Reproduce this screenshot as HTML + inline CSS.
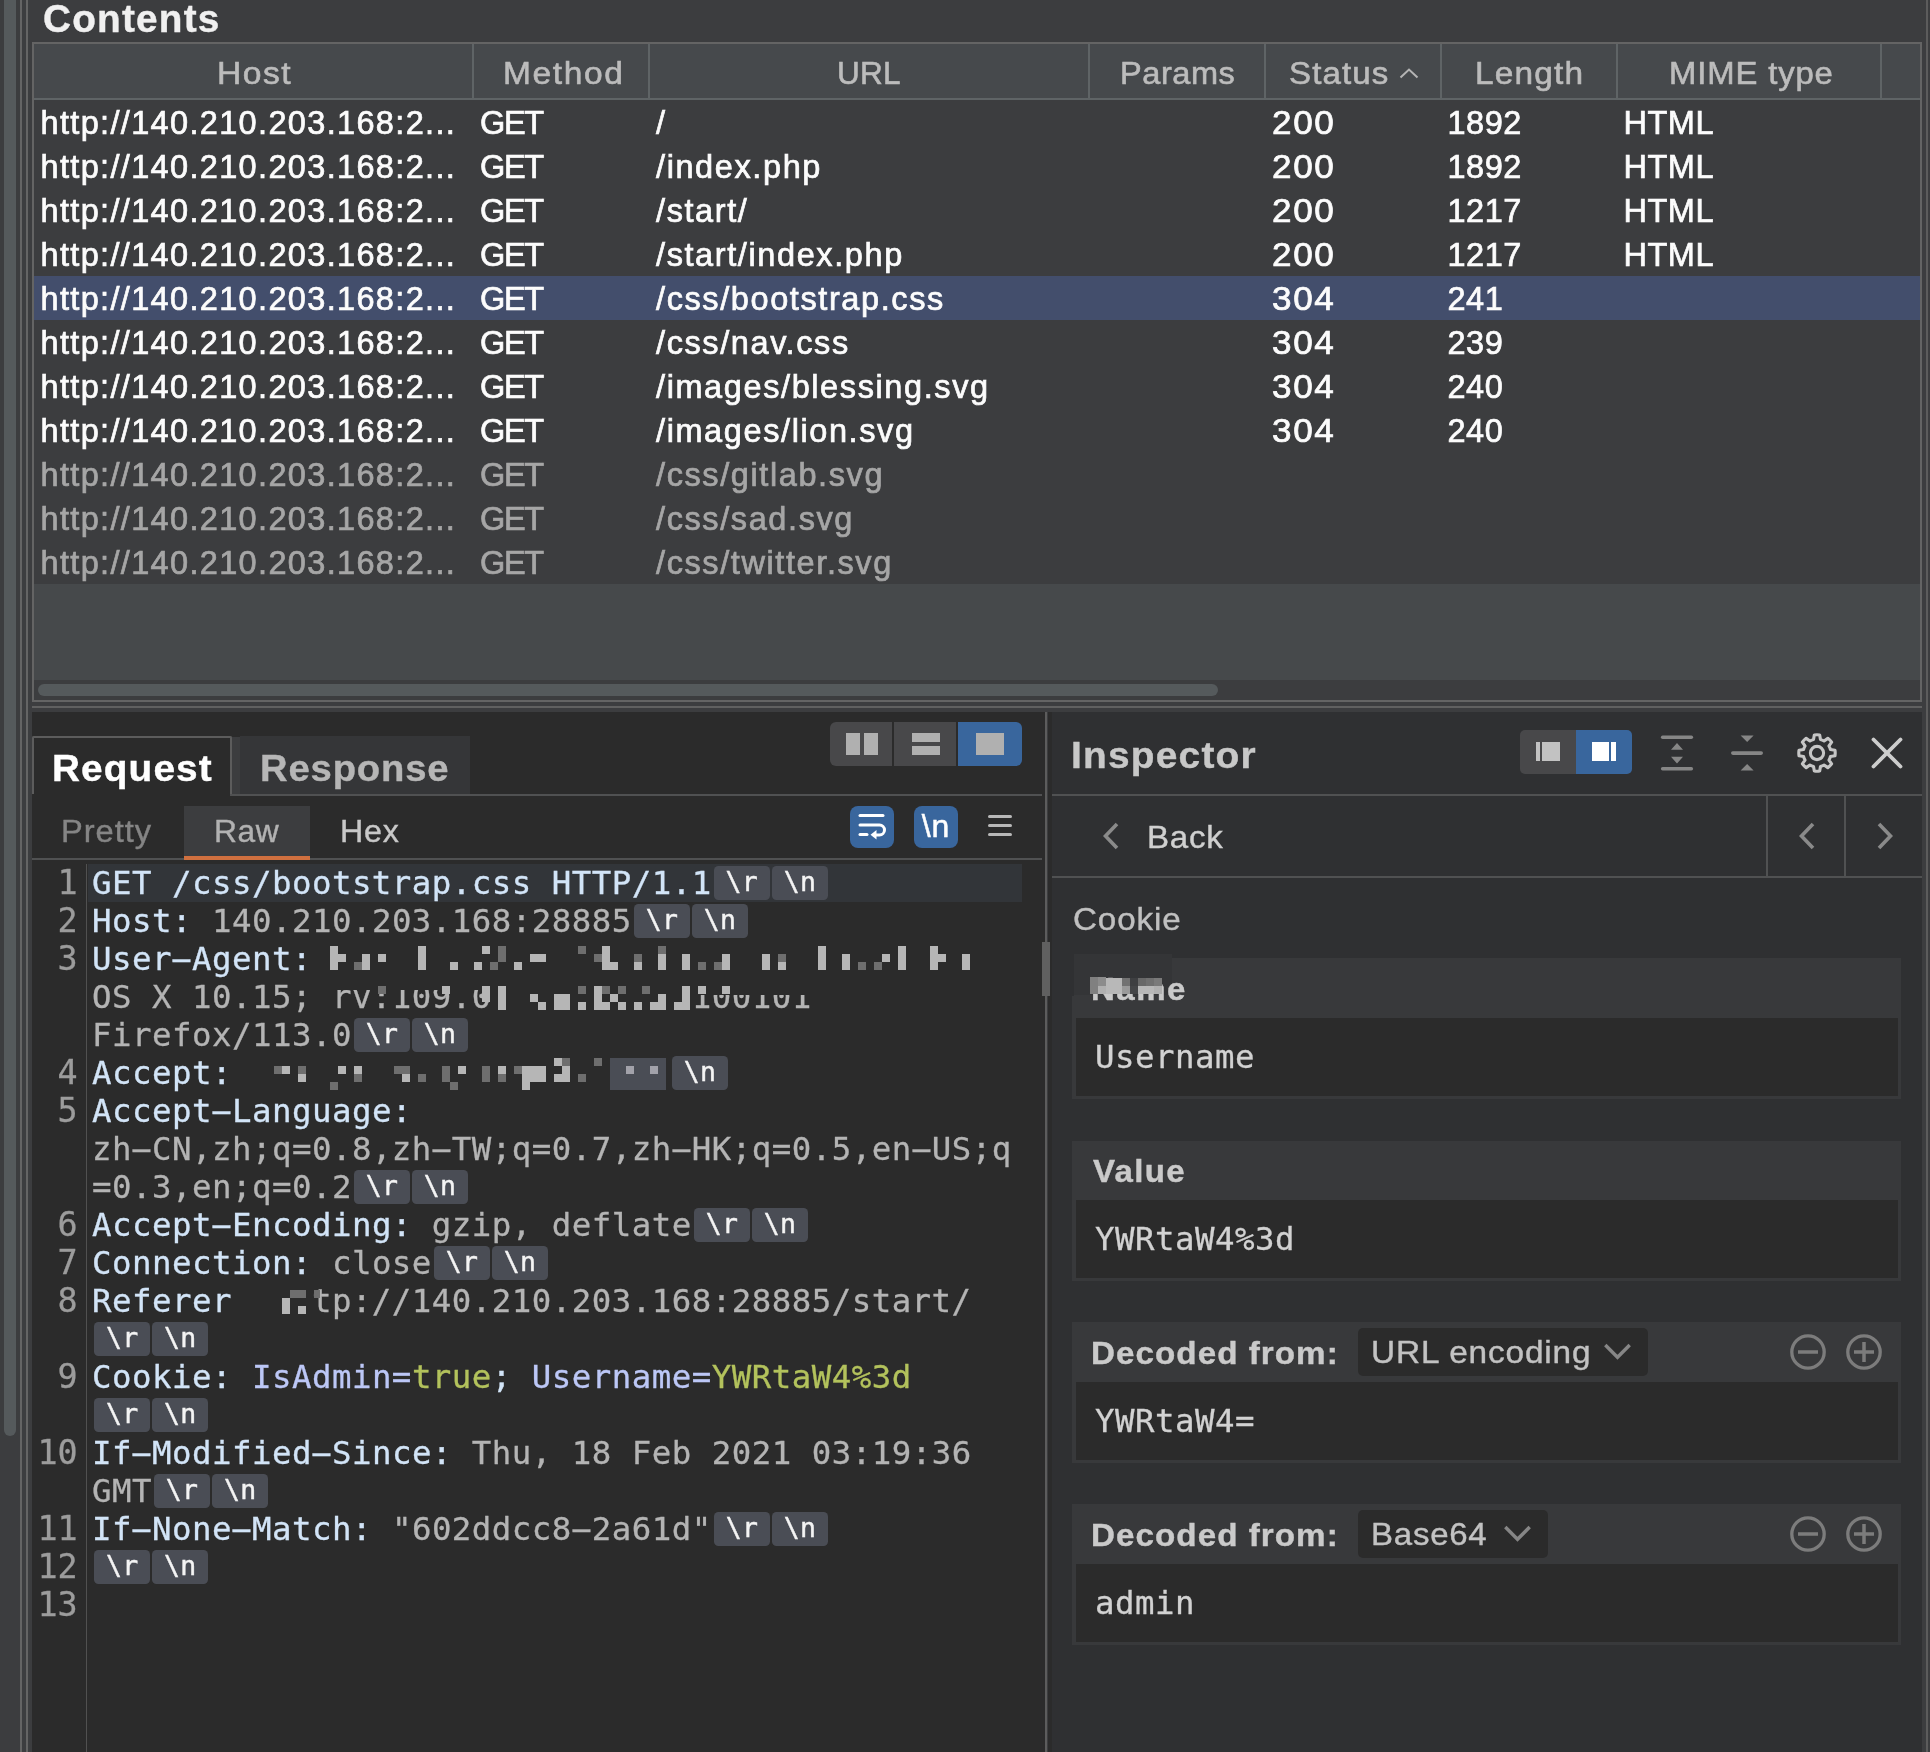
<!DOCTYPE html>
<html lang="en">
<head>
<meta charset="utf-8">
<title>Burp Suite - Contents</title>
<style>
*{box-sizing:border-box;margin:0;padding:0}
html,body{width:1930px;height:1752px;overflow:hidden;background:#3c3d3f}
body{position:relative;font-family:"Liberation Sans",sans-serif;color:#f0f0f0;-webkit-text-stroke:0.4px}
.abs{position:absolute}
.ln{position:absolute;background:#646464}
/* ---------- table ---------- */
#title{left:42.7px;top:-2.6px;font-size:38.5px;font-weight:bold;color:#f0f0f0;line-height:normal;letter-spacing:1.21px;transform:scaleX(1.006);transform-origin:0 0;white-space:nowrap}
#tbl{left:32px;top:42px;width:1890px;height:660px;border:2px solid #646464;background:#46494b}
#thead{left:0;top:0;width:1886px;height:54px;background:#46494c}
.th{position:absolute;top:10.9px;font-size:31.5px;line-height:normal;white-space:nowrap;color:#bcbcbc;transform-origin:0 0;-webkit-text-stroke:0.6px}
.vs{position:absolute;top:0;width:2px;height:54px;background:#5f6466}
#hline{left:0;top:54px;width:1886px;height:2px;background:#5f6466}
#rows{left:0;top:56px;width:1886px;height:484px;background:#3c3d3f}
.r{position:absolute;left:0;width:1886px;height:44px;font-size:32.5px;line-height:47px;color:#fcfcfc;white-space:nowrap;-webkit-text-stroke:0.7px}
.r.sel{background:#434e6c}
.r.dim{color:#a6a6a6}
.r span{position:absolute;top:0;transform-origin:0 50%}
.c1{left:6.5px;letter-spacing:1.34px}.c2{left:446px;letter-spacing:-1.3px}.c3{left:622px;letter-spacing:1.6px}.c5{left:1237.5px;letter-spacing:1.5px;transform:scaleX(1.08)}.c6{left:1413.5px;letter-spacing:0.5px}.c7{left:1589.5px;letter-spacing:0.5px}
#hscroll{left:0;top:636px;width:1886px;height:20px;background:#3c3d3f}
#hthumb{left:4px;top:4px;width:1180px;height:12px;border-radius:6px;background:#555a5c}
</style>
</head>
<body>
<div id="root" style="position:absolute;left:0;top:0;width:1930px;height:1752px;will-change:transform">
<!-- left window chrome -->
<div class="abs" style="left:4px;top:0;width:12px;height:1436px;background:#555a5c;border-radius:0 0 6px 6px"></div>
<div class="ln" style="left:20px;top:0;width:2px;height:1752px"></div>
<div class="ln" style="left:25.5px;top:0;width:2px;height:1752px"></div>
<div class="ln" style="left:1925.5px;top:0;width:2.2px;height:1752px;background:#5c5c5c"></div>

<div id="title" class="abs">Contents</div>

<div id="tbl" class="abs">
  <div id="thead" class="abs">
    <div class="th" style="left:183.2px;letter-spacing:1.42px;transform:scaleX(1.067)">Host</div>
    <div class="th" style="left:468.9px;letter-spacing:1.5px;transform:scaleX(1.064)">Method</div>
    <div class="th" style="left:803.0px;letter-spacing:0.25px;transform:scaleX(1.0)">URL</div>
    <div class="th" style="left:1086.4px;letter-spacing:0.55px;transform:scaleX(1.032)">Params</div>
    <div class="th" style="left:1254.9px;letter-spacing:1.05px;transform:scaleX(1.049)">Status</div>
    <div class="th" style="left:1441.4px;letter-spacing:1.1px;transform:scaleX(1.061)">Length</div>
    <div class="th" style="left:1634.9px;letter-spacing:0.84px;transform:scaleX(1.042)">MIME type</div>
    <svg class="abs" style="left:1364px;top:21.5px" width="22" height="14" viewBox="0 0 22 14"><path d="M2.5 11.5 L11 3.5 L19.5 11.5" fill="none" stroke="#b4b4b4" stroke-width="2"/></svg>
    <div class="vs" style="left:438px"></div><div class="vs" style="left:614px"></div><div class="vs" style="left:1054px"></div>
    <div class="vs" style="left:1230px"></div><div class="vs" style="left:1406px"></div><div class="vs" style="left:1582px"></div><div class="vs" style="left:1846px"></div>
  </div>
  <div id="hline" class="abs"></div>
  <div id="rows" class="abs">
    <div class="r" style="top:0"><span class="c1">http://140.210.203.168:2...</span><span class="c2">GET</span><span class="c3">/</span><span class="c5">200</span><span class="c6">1892</span><span class="c7">HTML</span></div>
    <div class="r" style="top:44px"><span class="c1">http://140.210.203.168:2...</span><span class="c2">GET</span><span class="c3">/index.php</span><span class="c5">200</span><span class="c6">1892</span><span class="c7">HTML</span></div>
    <div class="r" style="top:88px"><span class="c1">http://140.210.203.168:2...</span><span class="c2">GET</span><span class="c3">/start/</span><span class="c5">200</span><span class="c6">1217</span><span class="c7">HTML</span></div>
    <div class="r" style="top:132px"><span class="c1">http://140.210.203.168:2...</span><span class="c2">GET</span><span class="c3">/start/index.php</span><span class="c5">200</span><span class="c6">1217</span><span class="c7">HTML</span></div>
    <div class="r sel" style="top:176px"><span class="c1">http://140.210.203.168:2...</span><span class="c2">GET</span><span class="c3">/css/bootstrap.css</span><span class="c5">304</span><span class="c6">241</span></div>
    <div class="r" style="top:220px"><span class="c1">http://140.210.203.168:2...</span><span class="c2">GET</span><span class="c3">/css/nav.css</span><span class="c5">304</span><span class="c6">239</span></div>
    <div class="r" style="top:264px"><span class="c1">http://140.210.203.168:2...</span><span class="c2">GET</span><span class="c3">/images/blessing.svg</span><span class="c5">304</span><span class="c6">240</span></div>
    <div class="r" style="top:308px"><span class="c1">http://140.210.203.168:2...</span><span class="c2">GET</span><span class="c3">/images/lion.svg</span><span class="c5">304</span><span class="c6">240</span></div>
    <div class="r dim" style="top:352px"><span class="c1">http://140.210.203.168:2...</span><span class="c2">GET</span><span class="c3">/css/gitlab.svg</span></div>
    <div class="r dim" style="top:396px"><span class="c1">http://140.210.203.168:2...</span><span class="c2">GET</span><span class="c3">/css/sad.svg</span></div>
    <div class="r dim" style="top:440px"><span class="c1">http://140.210.203.168:2...</span><span class="c2">GET</span><span class="c3">/css/twitter.svg</span></div>
  </div>
  <div id="hscroll" class="abs"><div id="hthumb" class="abs"></div></div>
</div>
<div class="ln" style="left:32px;top:705.6px;width:1889.5px;height:2px;background:#606060"></div>


<style>
/* ---------- lower panes ---------- */
#req{left:32px;top:712px;width:1014px;height:1040px;background:#2b2b2b}
#insp{left:1048px;top:712px;width:874px;height:1040px;background:#2f3032}
.fx{position:absolute;white-space:nowrap;line-height:normal;transform-origin:0 0}
.tab1{font-weight:bold;font-size:37px}
.tab2{font-size:31px}
.hl{position:absolute;height:1.6px;background:#505152}
.bbtn{position:absolute;background:#48484a}
.bbtn.on{background:#39669d}
/* editor */
#ed{left:0;top:152px;width:1014px;height:888px;font-family:"DejaVu Sans Mono","Liberation Mono",monospace;font-size:32.4px;letter-spacing:0.49px;-webkit-text-stroke:0.3px}
.l{position:absolute;left:60px;height:38px;line-height:38px;white-space:pre;color:#b4b4b4}
.n{position:absolute;left:0;width:45.4px;height:38px;line-height:38px;text-align:right;color:#9c9c9c;white-space:pre;font-size:33.4px;letter-spacing:-0.1px}
.hy{display:inline-block;transform:scaleX(2.1)}
.h{color:#d2e4f7}
.k{color:#bcc7f6}
.v{color:#b3c25c}
.p{display:inline-block;vertical-align:top;width:55.9px;height:33.7px;margin:2.2px 0 0 2.2px;border-radius:4.5px;background:#4a4d55;color:#f4f4f4;font-size:26.5px;letter-spacing:0.3px;line-height:32px;text-align:center;-webkit-text-stroke:0.45px}
.m{position:absolute;width:8px;height:8px;background:#b0b0b0}
</style>
<div id="req" class="abs">
  <!-- Request / Response tabs -->
  <div class="abs" style="left:0;top:24.3px;width:200px;height:58px;border:2px solid #5c5c5c;border-bottom:none;border-radius:2px 2px 0 0"></div>
  <div class="abs" style="left:200px;top:25px;width:8px;height:57px;background:#3c3d3f"></div>
  <div class="abs" style="left:208px;top:24.3px;width:230px;height:57.5px;background:#353638"></div>
  <div class="hl" style="left:198.3px;top:81.9px;width:811.7px;height:2px"></div>
  <div class="fx tab1" style="left:19.5px;top:36px;color:#fff;letter-spacing:1.09px;transform:scaleX(1.047)">Request</div>
  <div class="fx tab1" style="left:227.8px;top:36px;color:#b6b6b6;letter-spacing:0.84px;transform:scaleX(1.032)">Response</div>
  <!-- layout buttons -->
  <div class="bbtn" style="left:798px;top:10px;width:62px;height:44px;border-radius:6px 0 0 6px"></div>
  <div class="bbtn" style="left:862px;top:10px;width:62px;height:44px"></div>
  <div class="bbtn on" style="left:926px;top:10px;width:64px;height:44px;border-radius:0 6px 6px 0"></div>
  <div class="abs" style="left:813.5px;top:21px;width:14.5px;height:22px;background:#b0b0b0"></div>
  <div class="abs" style="left:831.7px;top:21px;width:14.5px;height:22px;background:#b0b0b0"></div>
  <div class="abs" style="left:880px;top:21px;width:28px;height:9.3px;background:#b0b0b0"></div>
  <div class="abs" style="left:880px;top:34px;width:28px;height:9px;background:#b0b0b0"></div>
  <div class="abs" style="left:944.4px;top:21px;width:27.2px;height:22px;background:#b0b0b0"></div>
  <!-- Pretty / Raw / Hex -->
  <div class="abs" style="left:152px;top:94px;width:126px;height:50px;background:#3c3d3f"></div>
    <div class="fx tab2" style="left:29.3px;top:102px;color:#858585;letter-spacing:0.94px;transform:scaleX(1.052)">Pretty</div>
  <div class="fx tab2" style="left:181.6px;top:102px;color:#b2b2b2;letter-spacing:0.6px;transform:scaleX(1.023)">Raw</div>
  <div class="fx tab2" style="left:307.6px;top:102px;color:#c8c8c8;letter-spacing:0.78px;transform:scaleX(1.039)">Hex</div>
  <div class="hl" style="left:0;top:146.2px;width:1010px"></div>
  <div class="abs" style="left:152px;top:144px;width:126px;height:3.8px;background:#d0703f"></div>
  <!-- editor toolbar buttons -->
  <div class="bbtn on" style="left:818px;top:94px;width:44px;height:42px;border-radius:8px"></div>
  <svg class="abs" style="left:818px;top:93px" width="44" height="42" viewBox="0 0 44 42"><g fill="none" stroke="#fff" stroke-width="3" stroke-linecap="round" stroke-linejoin="round"><path d="M10 10.5H33"/><path d="M10 20H29.5a5 5 0 0 1 0 10H24"/><path d="M10 29.5H17"/></g><path d="M20.5 29.8 L26.5 25 V34.6 Z" fill="#fff"/></svg>
  <div class="bbtn on" style="left:882px;top:94px;width:44px;height:42px;border-radius:8px"></div>
  <div class="abs" style="left:882px;top:94px;width:44px;height:42px;line-height:40px;text-align:center;font-size:32px;color:#fff;letter-spacing:1px;-webkit-text-stroke:0.5px">\n</div>
  <div class="abs" style="left:956px;top:103px;width:24px;height:3px;border-radius:1.5px;background:#b8b8b8"></div>
  <div class="abs" style="left:956px;top:112px;width:24px;height:3px;border-radius:1.5px;background:#b8b8b8"></div>
  <div class="abs" style="left:956px;top:121px;width:24px;height:3px;border-radius:1.5px;background:#b8b8b8"></div>
  <!-- editor -->
  <div id="ed" class="abs">
    <div class="abs" style="left:53.8px;top:0;width:1.4px;height:888px;background:#515151"></div>
    <div class="abs" style="left:56px;top:0;width:934px;height:38px;background:#323539"></div>
    <div class="n" style="top:0px">1</div>
    <div class="l" style="top:0px"><span class="h">GET /css/bootstrap.css HTTP/1.1</span><span class="p">\r</span><span class="p">\n</span></div>
    <div class="n" style="top:38px">2</div>
    <div class="l" style="top:38px"><span class="h">Host:</span> 140.210.203.168:28885<span class="p">\r</span><span class="p">\n</span></div>
    <div class="n" style="top:76px">3</div>
    <div class="l" style="top:76px"><span class="h">User<span class="hy">-</span>Agent:</span> </div>
    <div class="l" style="top:114px">OS X 10.15; rv:109.0          100101</div>
    <div class="l" style="top:152px">Firefox/113.0<span class="p">\r</span><span class="p">\n</span></div>
    <div class="n" style="top:190px">4</div>
    <div class="l" style="top:190px"><span class="h">Accept:</span>                   <span class="p" style="visibility:hidden">\r</span><span class="p">\n</span></div>
    <div class="n" style="top:228px">5</div>
    <div class="l" style="top:228px"><span class="h">Accept<span class="hy">-</span>Language:</span></div>
    <div class="l" style="top:266px">zh<span class="hy">-</span>CN,zh;q=0.8,zh<span class="hy">-</span>TW;q=0.7,zh<span class="hy">-</span>HK;q=0.5,en<span class="hy">-</span>US;q</div>
    <div class="l" style="top:304px">=0.3,en;q=0.2<span class="p">\r</span><span class="p">\n</span></div>
    <div class="n" style="top:342px">6</div>
    <div class="l" style="top:342px"><span class="h">Accept<span class="hy">-</span>Encoding:</span> gzip, deflate<span class="p">\r</span><span class="p">\n</span></div>
    <div class="n" style="top:380px">7</div>
    <div class="l" style="top:380px"><span class="h">Connection:</span> close<span class="p">\r</span><span class="p">\n</span></div>
    <div class="n" style="top:418px">8</div>
    <div class="l" style="top:418px"><span class="h">Referer</span>    tp://140.210.203.168:28885/start/</div>
    <div class="l" style="top:456px"><span class="p">\r</span><span class="p">\n</span></div>
    <div class="n" style="top:494px">9</div>
    <div class="l" style="top:494px"><span class="h">Cookie:</span> <span class="k">IsAdmin=</span><span class="v">true</span><span class="h">;</span> <span class="k">Username=</span><span class="v">YWRtaW4%3d</span></div>
    <div class="l" style="top:532px"><span class="p">\r</span><span class="p">\n</span></div>
    <div class="n" style="top:570px">10</div>
    <div class="l" style="top:570px"><span class="h">If<span class="hy">-</span>Modified<span class="hy">-</span>Since:</span> Thu, 18 Feb 2021 03:19:36</div>
    <div class="l" style="top:608px">GMT<span class="p">\r</span><span class="p">\n</span></div>
    <div class="n" style="top:646px">11</div>
    <div class="l" style="top:646px"><span class="h">If<span class="hy">-</span>None<span class="hy">-</span>Match:</span> "602ddcc8<span class="hy">-</span>2a61d"<span class="p">\r</span><span class="p">\n</span></div>
    <div class="n" style="top:684px">12</div>
    <div class="l" style="top:684px"><span class="p">\r</span><span class="p">\n</span></div>
    <div class="n" style="top:722px">13</div>
    <svg class="abs" style="left:0;top:0" width="1014" height="888" viewBox="0 0 1014 888" shape-rendering="crispEdges"><rect x="298" y="114" width="182" height="12" fill="#2b2b2b"/><rect x="658" y="114" width="124" height="17" fill="#2b2b2b"/><rect x="578" y="194" width="56" height="32" fill="#4a4d55"/><path d="M594 202h8v8h-8zM618 202h8v8h-8z" fill="#a2a2aa"/><path d="M298 82h8v8h-8zM386 82h8v8h-8zM450 82h8v8h-8zM570 82h8v8h-8zM786 82h8v8h-8zM866 82h8v8h-8zM898 82h8v8h-8zM298 90h8v8h-8zM306 90h8v8h-8zM330 90h8v8h-8zM346 90h8v8h-8zM386 90h8v8h-8zM498 90h8v8h-8zM506 90h8v8h-8zM570 90h8v8h-8zM626 90h8v8h-8zM650 90h8v8h-8zM690 90h8v8h-8zM730 90h8v8h-8zM786 90h8v8h-8zM810 90h8v8h-8zM850 90h8v8h-8zM866 90h8v8h-8zM898 90h8v8h-8zM906 90h8v8h-8zM930 90h8v8h-8zM298 98h8v8h-8zM330 98h8v8h-8zM386 98h8v8h-8zM418 98h8v8h-8zM442 98h8v8h-8zM482 98h8v8h-8zM570 98h8v8h-8zM578 98h8v8h-8zM602 98h8v8h-8zM626 98h8v8h-8zM650 98h8v8h-8zM690 98h8v8h-8zM730 98h8v8h-8zM746 98h8v8h-8zM786 98h8v8h-8zM810 98h8v8h-8zM866 98h8v8h-8zM898 98h8v8h-8zM930 98h8v8h-8zM410 122h8v8h-8zM450 122h8v8h-8zM466 122h8v8h-8zM562 122h8v8h-8zM650 122h8v8h-8zM666 122h8v8h-8zM690 122h8v8h-8zM450 130h8v8h-8zM466 130h8v8h-8zM498 130h8v8h-8zM522 130h8v8h-8zM530 130h8v8h-8zM562 130h8v8h-8zM578 130h8v8h-8zM626 130h8v8h-8zM650 130h8v8h-8zM466 138h8v8h-8zM506 138h8v8h-8zM522 138h8v8h-8zM530 138h8v8h-8zM546 138h8v8h-8zM562 138h8v8h-8zM570 138h8v8h-8zM586 138h8v8h-8zM602 138h8v8h-8zM618 138h8v8h-8zM626 138h8v8h-8zM642 138h8v8h-8zM650 138h8v8h-8zM522 194h8v8h-8zM250 202h8v8h-8zM306 202h8v8h-8zM322 202h8v8h-8zM426 202h8v8h-8zM466 202h8v8h-8zM490 202h8v8h-8zM498 202h8v8h-8zM506 202h8v8h-8zM530 202h8v8h-8zM266 210h8v8h-8zM370 210h8v8h-8zM490 210h8v8h-8zM498 210h8v8h-8zM506 210h8v8h-8zM522 210h8v8h-8zM530 210h8v8h-8zM490 218h8v8h-8zM250 434h8v8h-8zM250 442h8v8h-8zM266 442h8v8h-8z" fill="#b6b6b6"/><path d="M466 82h8v8h-8zM546 82h8v8h-8zM626 82h8v8h-8zM466 90h8v8h-8zM562 90h8v8h-8zM602 90h8v8h-8zM746 90h8v8h-8zM322 98h8v8h-8zM458 98h8v8h-8zM666 98h8v8h-8zM682 98h8v8h-8zM826 98h8v8h-8zM842 98h8v8h-8zM346 122h8v8h-8zM546 122h8v8h-8zM570 122h8v8h-8zM586 122h8v8h-8zM610 122h8v8h-8zM530 194h8v8h-8zM562 194h8v8h-8zM242 202h8v8h-8zM266 202h8v8h-8zM362 202h8v8h-8zM370 202h8v8h-8zM410 202h8v8h-8zM450 202h8v8h-8zM482 202h8v8h-8zM322 210h8v8h-8zM386 210h8v8h-8zM410 210h8v8h-8zM450 210h8v8h-8zM466 210h8v8h-8zM546 210h8v8h-8zM298 218h8v8h-8zM418 218h8v8h-8zM258 426h8v8h-8zM266 426h8v8h-8zM282 426h6v8h-6z" fill="#6e6e6e"/></svg>
  </div>
</div>
<div id="insp" class="abs"><div class="abs" style="left:0;top:0;width:4px;height:1040px;background:#2b2b2b"></div>

<style>
#insp .t{position:absolute;white-space:nowrap}
.card{position:absolute;left:24.3px;width:829px;height:140.6px;background:#38393b}
.fld{position:absolute;left:3.7px;top:59.6px;width:821.7px;height:77.7px;background:#2b2b2b;font-family:"DejaVu Sans Mono","Liberation Mono",monospace;font-size:32.4px;line-height:78.6px;padding-left:19px;color:#d2d2d2;letter-spacing:0.49px;white-space:pre;-webkit-text-stroke:0.3px}
.lbl{left:18.6px;top:12.4px;font-weight:bold;font-size:31.5px;color:#cacaca;letter-spacing:1px;transform:scaleX(1.053)}
.dd{position:absolute;left:286px;top:5.6px;height:47.6px;border-radius:5px;background:#2b2b2b}
.ddt{left:298.6px;top:11.7px;font-size:32px;color:#c2c2c2}
.ico{position:absolute}
</style>
  <div class="fx" style="left:23.4px;top:22.9px;font-weight:bold;font-size:37px;color:#c8c8c8;letter-spacing:1.17px;transform:scaleX(1.05)">Inspector</div>
  <!-- view toggle -->
  <div class="bbtn" style="left:472px;top:18px;width:56px;height:44px;border-radius:5px 0 0 5px"></div>
  <div class="bbtn on" style="left:528px;top:18px;width:56px;height:44px;border-radius:0 5px 5px 0"></div>
  <div class="abs" style="left:488px;top:29.6px;width:4px;height:19.2px;background:#c2c2c2"></div>
  <div class="abs" style="left:494.3px;top:29.6px;width:17.7px;height:19.2px;background:#c2c2c2"></div>
  <div class="abs" style="left:544px;top:29.6px;width:17px;height:19.2px;background:#fff"></div>
  <div class="abs" style="left:563.4px;top:29.6px;width:4.6px;height:19.2px;background:#fff"></div>
  <!-- expand all -->
  <svg class="ico" style="left:608px;top:18px" width="42" height="44" viewBox="0 0 42 44"><g stroke="#868686" stroke-width="3.4" stroke-linecap="round"><path d="M6.6 7.3H35.4"/><path d="M6.6 38.8H35.4"/></g><path d="M15 19.7 L21 13 L27 19.7Z M15 26.8 L21 33.5 L27 26.8Z" fill="#868686"/></svg>
  <!-- collapse all -->
  <svg class="ico" style="left:678px;top:18px" width="42" height="44" viewBox="0 0 42 44"><path d="M6.8 23.1H35.2" stroke="#868686" stroke-width="3.6" stroke-linecap="round"/><path d="M14.6 5.6 L27.6 5.6 L21.1 11.9Z M14.6 40.6 L27.6 40.6 L21.1 34Z" fill="#868686"/></svg>
  <!-- gear -->
  <svg class="ico" style="left:745.8px;top:18px" width="46" height="46" viewBox="0 0 46 46" fill="none" stroke="#c6c6c6" stroke-width="3.1" stroke-linejoin="round"><path d="M19.52 9.54L20.31 5.00A18.2 18.2 0 0 1 25.69 5.00L26.48 9.54A13.9 13.9 0 0 1 30.05 11.02L33.83 8.37A18.2 18.2 0 0 1 37.63 12.17L34.98 15.95A13.9 13.9 0 0 1 36.46 19.52L41.00 20.31A18.2 18.2 0 0 1 41.00 25.69L36.46 26.48A13.9 13.9 0 0 1 34.98 30.05L37.63 33.83A18.2 18.2 0 0 1 33.83 37.63L30.05 34.98A13.9 13.9 0 0 1 26.48 36.46L25.69 41.00A18.2 18.2 0 0 1 20.31 41.00L19.52 36.46A13.9 13.9 0 0 1 15.95 34.98L12.17 37.63A18.2 18.2 0 0 1 8.37 33.83L11.02 30.05A13.9 13.9 0 0 1 9.54 26.48L5.00 25.69A18.2 18.2 0 0 1 5.00 20.31L9.54 19.52A13.9 13.9 0 0 1 11.02 15.95L8.37 12.17A18.2 18.2 0 0 1 12.17 8.37L15.95 11.02A13.9 13.9 0 0 1 19.52 9.54Z"/><circle cx="23" cy="23" r="6.6"/></svg>
  <!-- close -->
  <svg class="ico" style="left:820px;top:22px" width="38" height="38" viewBox="0 0 38 38"><path d="M5.5 5.5 L32.5 32.5 M32.5 5.5 L5.5 32.5" stroke="#cdcdcd" stroke-width="3.8" stroke-linecap="round"/></svg>
  <div class="hl" style="left:4px;top:82.4px;width:870px"></div>
  <div class="hl" style="left:4px;top:164px;width:870px"></div>
  <div class="abs" style="left:718.3px;top:83px;width:1.6px;height:82px;background:#505152"></div>
  <div class="abs" style="left:796.3px;top:83px;width:1.6px;height:82px;background:#505152"></div>
  <svg class="ico" style="left:52px;top:108px" width="22" height="32" viewBox="0 0 22 32"><path d="M17 4 L5.5 16 L17 28" fill="none" stroke="#8a8a8a" stroke-width="3.6"/></svg>
  <div class="fx" style="left:99.4px;top:106.7px;font-size:32px;color:#d0d0d0;letter-spacing:0.73px;transform:scaleX(1.034)">Back</div>
  <svg class="ico" style="left:748px;top:108px" width="22" height="32" viewBox="0 0 22 32"><path d="M17 4 L5.5 16 L17 28" fill="none" stroke="#8a8a8a" stroke-width="3.6"/></svg>
  <svg class="ico" style="left:826px;top:108px" width="22" height="32" viewBox="0 0 22 32"><path d="M5 4 L16.5 16 L5 28" fill="none" stroke="#8a8a8a" stroke-width="3.6"/></svg>
  <div class="fx" style="left:24.5px;top:189.3px;font-size:32px;color:#c0c0c0;letter-spacing:0.87px;transform:scaleX(1.036)">Cookie</div>
  <!-- cards -->
  <div class="card" style="top:246.4px"><svg class="ico" style="left:0;top:-5px" width="110" height="50" viewBox="0 -5 110 50" shape-rendering="crispEdges"><rect x="0" y="0" width="2" height="37.6" fill="#2f3032"/><rect x="2" y="-4.4" width="98.4" height="41" fill="#343537"/></svg><div class="fx lbl" style="letter-spacing:1.38px;transform:scaleX(1.049)">Name</div><svg class="ico" style="left:0;top:0" width="110" height="50" viewBox="0 0 110 50" shape-rendering="crispEdges"><rect x="17.7" y="18.6" width="8" height="9" fill="#808080"/><rect x="25.7" y="18.6" width="8" height="9" fill="#8c8c8c"/><rect x="33.7" y="19.6" width="8" height="8" fill="#b8b8b8"/><rect x="41.7" y="19.6" width="8" height="8" fill="#b8b8b8"/><rect x="49.7" y="19.6" width="8" height="8" fill="#727272"/><rect x="57.7" y="19.6" width="8" height="8" fill="#3e3f41"/><rect x="65.7" y="19.6" width="8" height="8" fill="#686868"/><rect x="73.7" y="19.6" width="8" height="8" fill="#707070"/><rect x="81.7" y="19.6" width="8" height="8" fill="#7a7a7a"/><rect x="17.7" y="27.6" width="8" height="8" fill="#808080"/><rect x="25.7" y="27.6" width="8" height="8" fill="#b0b0b0"/><rect x="33.7" y="27.6" width="8" height="8" fill="#b8b8b8"/><rect x="41.7" y="27.6" width="8" height="8" fill="#b8b8b8"/><rect x="49.7" y="27.6" width="8" height="8" fill="#9a9a9a"/><rect x="57.7" y="27.6" width="8" height="8" fill="#444547"/><rect x="65.7" y="27.6" width="8" height="8" fill="#b8b8b8"/><rect x="73.7" y="27.6" width="8" height="8" fill="#b8b8b8"/><rect x="81.7" y="27.6" width="8" height="8" fill="#b0b0b0"/></svg><div class="fld">Username</div></div>
  <div class="card" style="top:428.5px"><div class="fx lbl" style="left:20.7px;letter-spacing:1.29px;transform:scaleX(1.049)">Value</div><div class="fld">YWRtaW4%3d</div></div>
  <div class="card" style="top:610.4px"><div class="fx lbl">Decoded from:</div><div class="dd" style="width:289.6px"></div><div class="fx ddt" style="letter-spacing:0.81px;transform:scaleX(1.043)">URL encoding</div>
    <svg class="ico" style="left:530.7px;top:19.6px" width="30" height="20" viewBox="0 0 30 20"><path d="M2.3 3 L14.5 15.3 L26.7 3" fill="none" stroke="#868686" stroke-width="3.4"/></svg>
    <svg class="ico" style="left:715.8px;top:9.8px" width="40" height="40" viewBox="0 0 40 40"><circle cx="20" cy="20" r="16.2" fill="none" stroke="#7c7c7c" stroke-width="3.3"/><path d="M10 20H30" stroke="#7c7c7c" stroke-width="3.5"/></svg>
    <svg class="ico" style="left:771.8px;top:9.8px" width="40" height="40" viewBox="0 0 40 40"><circle cx="20" cy="20" r="16.2" fill="none" stroke="#7c7c7c" stroke-width="3.3"/><path d="M10 20H30M20 10V30" stroke="#7c7c7c" stroke-width="3.5"/></svg>
    <div class="fld">YWRtaW4=</div></div>
  <div class="card" style="top:792.4px"><div class="fx lbl">Decoded from:</div><div class="dd" style="width:189.3px"></div><div class="fx ddt" style="letter-spacing:0.74px;transform:scaleX(1.031)">Base64</div>
    <svg class="ico" style="left:430.7px;top:19.6px" width="30" height="20" viewBox="0 0 30 20"><path d="M2.3 3 L14.5 15.3 L26.7 3" fill="none" stroke="#868686" stroke-width="3.4"/></svg>
    <svg class="ico" style="left:715.8px;top:9.8px" width="40" height="40" viewBox="0 0 40 40"><circle cx="20" cy="20" r="16.2" fill="none" stroke="#7c7c7c" stroke-width="3.3"/><path d="M10 20H30" stroke="#7c7c7c" stroke-width="3.5"/></svg>
    <svg class="ico" style="left:771.8px;top:9.8px" width="40" height="40" viewBox="0 0 40 40"><circle cx="20" cy="20" r="16.2" fill="none" stroke="#7c7c7c" stroke-width="3.3"/><path d="M10 20H30M20 10V30" stroke="#7c7c7c" stroke-width="3.5"/></svg>
    <div class="fld">admin</div></div>

</div>

<div class="abs" style="left:1045.2px;top:712px;width:2.3px;height:1040px;background:#5c5c5c"></div>
<div class="abs" style="left:1042px;top:942px;width:8px;height:54px;background:#606060"></div>
</div>
</body>
</html>
